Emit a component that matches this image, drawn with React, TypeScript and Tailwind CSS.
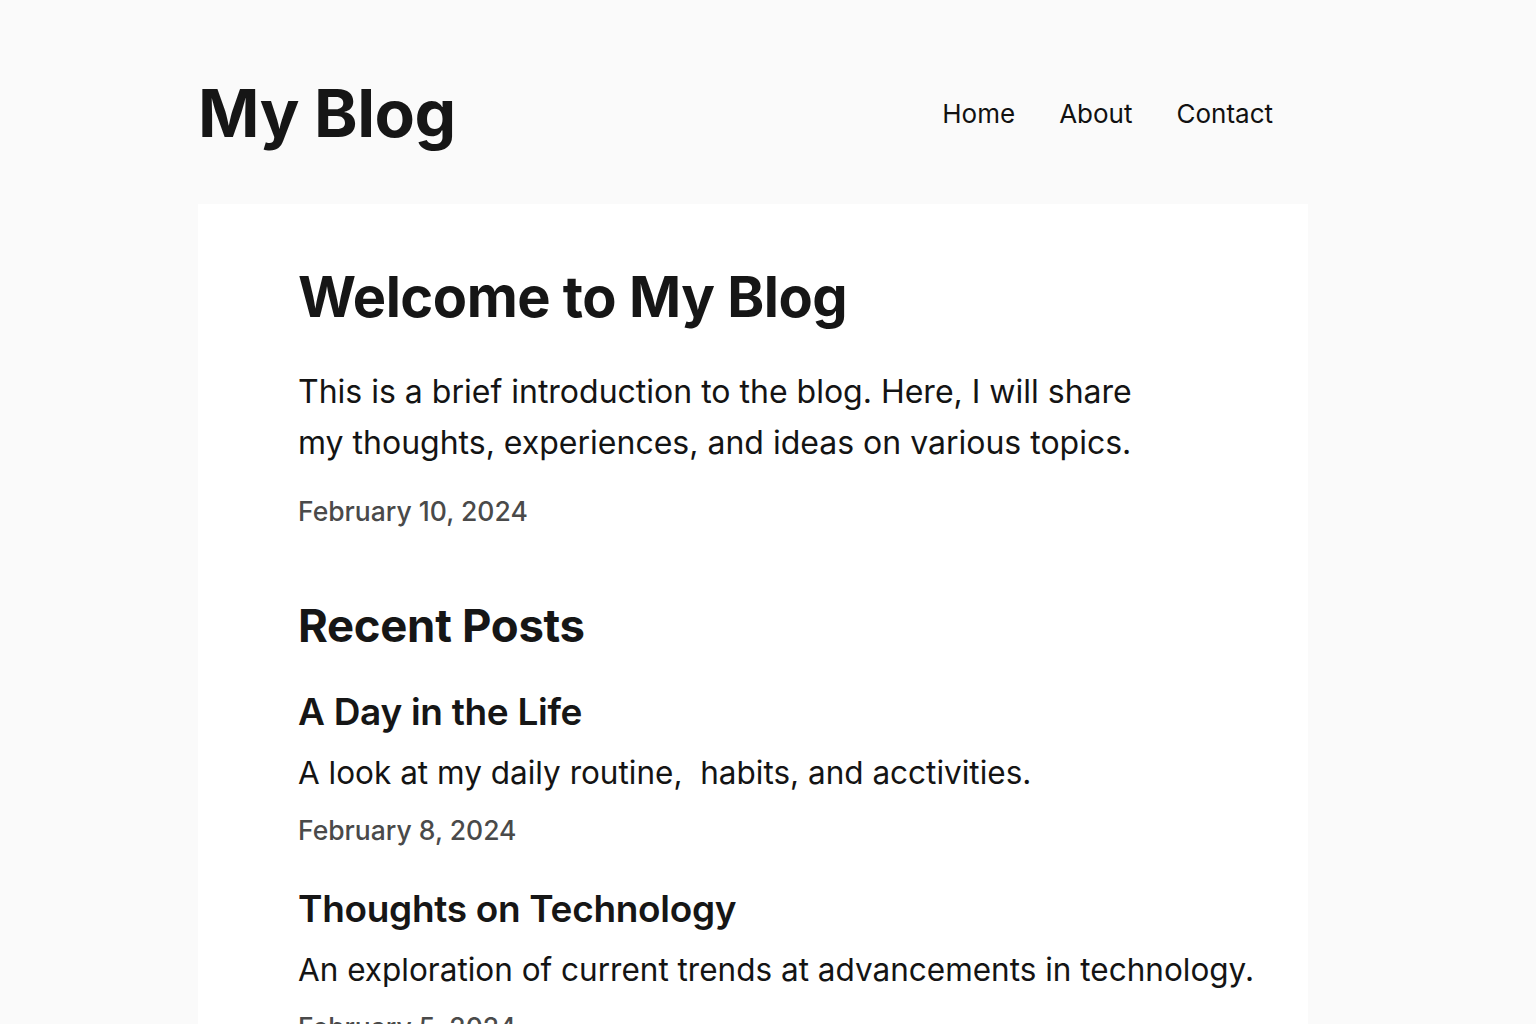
const posts = [
  {
    title: 'A Day in the Life',
    excerpt: 'A look at my daily routine,  habits, and acctivities.',
    date: 'February 8, 2024',
  },
  {
    title: 'Thoughts on Technology',
    excerpt: 'An exploration of current trends at advancements in technology.',
    date: 'February 5, 2024',
  },
];

const App = () => {
  return (
    <div
      className="min-h-screen bg-[#fafafa] text-[#161616]"
      style={{ fontFamily: 'Inter, "Noto Sans", sans-serif' }}
    >
      <div className="ml-[198px] w-[1110px]">
        <header className="flex items-center justify-between h-[204px] pt-[22px] pr-[35px]">
          <h1 className="text-[66px] font-bold tracking-[-0.5px] leading-none">My Blog</h1>
          <nav className="flex gap-[44px] text-[26px] text-[#111]">
            <a href="#">Home</a>
            <a href="#">About</a>
            <a href="#">Contact</a>
          </nav>
        </header>

        <main className="bg-white px-[100px] pt-[58px] pb-10 h-[820px] overflow-hidden">
          <h2 className="text-[56px] font-bold tracking-[-0.5px] leading-[70px]">Welcome to My Blog</h2>
          <p className="mt-[34px] max-w-[860px] text-[32px] leading-[51px] text-[#141414]">
            This is a brief introduction to the blog. Here, I will share my thoughts, experiences,
            and ideas on various topics.
          </p>
          <div className="mt-[24px] text-[26.5px] font-medium text-[#4a4a4a]">February 10, 2024</div>

          <h3 className="mt-[66px] text-[45.5px] font-bold tracking-[-0.3px] leading-[56px]">Recent Posts</h3>
          <div className="mt-[35px] flex flex-col gap-[36px]">
            {posts.map((p) => (
              <article key={p.title}>
                <h4 className="text-[37px] font-semibold tracking-[-0.3px] leading-[46px]">{p.title}</h4>
                <p className="mt-[18px] text-[31.5px] leading-[39px] text-[#141414] whitespace-pre">{p.excerpt}</p>
                <div className="mt-[19px] text-[26.5px] leading-[39px] font-medium text-[#4a4a4a]">{p.date}</div>
              </article>
            ))}
          </div>
        </main>
      </div>
    </div>
  );
};

export default App;
